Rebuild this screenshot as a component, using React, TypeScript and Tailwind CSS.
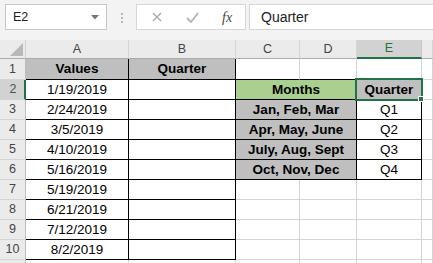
import React from "react";

const font = { fontFamily: '"Liberation Sans", Arial, sans-serif' };

type Cell = {
  text?: string;
  bold?: boolean;
  fill?: "gray" | "green";
  span?: number;
  r?: "black" | "grid";
  b?: "black" | "grid";
};

const fills = {
  gray: "bg-[#bfbfbf]",
  green: "bg-[#a9d08e]",
};

const dates = ["1/19/2019", "2/24/2019", "3/5/2019", "4/10/2019", "5/16/2019", "5/19/2019", "6/21/2019", "7/12/2019", "8/2/2019"];
const lookup: [string, string][] = [
  ["Jan, Feb, Mar", "Q1"],
  ["Apr, May, June", "Q2"],
  ["July, Aug, Sept", "Q3"],
  ["Oct, Nov, Dec", "Q4"],
];

function buildRows(): Cell[][] {
  const rows: Cell[][] = [];
  // row 1
  rows.push([
    { text: "Values", bold: true, fill: "gray", r: "black", b: "black" },
    { text: "Quarter", bold: true, fill: "gray", r: "black", b: "black" },
    { b: "black" },
    { b: "black" },
    { b: "black" },
    {},
  ]);
  // row 2
  rows.push([
    { text: dates[0], r: "black", b: "black" },
    { r: "black", b: "black" },
    { text: "Months", bold: true, fill: "green", span: 2, r: "black", b: "black" },
    { text: "Quarter", bold: true, fill: "gray", r: "black", b: "black" },
    {},
  ]);
  lookup.forEach(([m, q], i) => {
    rows.push([
      { text: dates[i + 1], r: "black", b: "black" },
      { r: "black", b: "black" },
      { text: m, bold: true, fill: "gray", span: 2, r: "black", b: "black" },
      { text: q, r: "black", b: "black" },
      {},
    ]);
  });
  for (let i = 5; i < 9; i++) {
    rows.push([
      { text: dates[i], r: "black", b: "black" },
      { r: "black", b: "black" },
      {},
      {},
      {},
      {},
    ]);
  }
  // row 11, only its top edge shows
  rows.push([{}, {}, {}, {}, {}, {}]);
  return rows;
}

function DataCell({ cell }: { cell: Cell }) {
  const rc = cell.r === "black" ? "border-r-black" : "border-r-[#d4d4d4]";
  const bc = cell.b === "black" ? "border-b-black" : "border-b-[#d4d4d4]";
  return (
    <div
      className={`flex items-center justify-center overflow-hidden whitespace-nowrap border-r border-b pt-px text-[13.5px] text-black ${rc} ${bc} ${
        cell.fill ? fills[cell.fill] : "bg-white"
      } ${cell.bold ? "font-bold" : ""} ${cell.span === 2 ? "col-span-2" : ""}`}
    >
      {cell.text}
    </div>
  );
}

export default function App() {
  const rows = buildRows();
  const colLetters = ["A", "B", "C", "D", "E", ""];

  return (
    <div className="h-[263px] w-[433px] overflow-hidden bg-white" style={font}>
      {/* formula bar */}
      <div className="flex h-[40px] items-start bg-[#f3f3f3] pt-[4px] pl-[5px]">
        <div className="relative flex h-[26px] w-[102px] items-center border border-[#c8c8c8] bg-white pl-[7px] text-[12.5px] text-[#222]">
          E2
          <svg className="absolute right-[7px] top-[10px]" width="8" height="5" viewBox="0 0 8 5">
            <path d="M0 0h8L4 4.5z" fill="#777" />
          </svg>
        </div>
        <div className="ml-[14px] mt-[9px] flex flex-col gap-[2px]">
          <span className="h-[2px] w-[2px] bg-[#b8b8b8]" />
          <span className="h-[2px] w-[2px] bg-[#b8b8b8]" />
          <span className="h-[2px] w-[2px] bg-[#b8b8b8]" />
        </div>
        <div className="ml-[13px] flex h-[26px] w-[110px] items-center border border-[#d6d6d6] bg-white">
          <svg className="ml-[15px]" width="10" height="10" viewBox="0 0 10 10">
            <path d="M1 1l8 8M9 1l-8 8" stroke="#a8a8a8" strokeWidth="1.3" />
          </svg>
          <svg className="ml-[24px]" width="13" height="11" viewBox="0 0 13 11">
            <path d="M1 6l4 4 7-9" stroke="#b4b4b4" strokeWidth="1.8" fill="none" />
          </svg>
          <span
            className="ml-[23px] text-[14px] italic text-[#444]"
            style={{ fontFamily: '"Liberation Serif", "Times New Roman", serif' }}
          >
            fx
          </span>
        </div>
        <div className="ml-[3px] flex h-[26px] flex-1 items-center border border-[#d6d6d6] border-r-0 bg-white pl-[11px] text-[14px] text-[#222]">
          Quarter
        </div>
      </div>

      {/* sheet */}
      <div className="relative grid grid-cols-[26px_103px_107px_64px_57px_65px_1fr] grid-rows-[19px_21px_repeat(10,20px)]">
        <div className="relative border-r border-b border-r-[#d4d4d4] border-b-[#ababab] bg-[#ebebeb]">
          <svg className="absolute right-[2px] bottom-[2px]" width="13" height="13" viewBox="0 0 13 13">
            <path d="M13 0V13H0z" fill="#b8b8b8" />
          </svg>
        </div>
        {colLetters.map((c, i) =>
          c === "E" ? (
            <div
              key={i}
              className="flex items-center justify-center border-r border-b-2 border-r-[#c8c8c8] border-b-[#217346] bg-[#d2d2d2] text-[12.5px] text-[#217346]"
            >
              {c}
            </div>
          ) : (
            <div
              key={i}
              className="flex items-center justify-center border-r border-b border-r-[#d4d4d4] border-b-[#ababab] bg-[#ebebeb] text-[12.5px] text-[#444]"
            >
              {c}
            </div>
          )
        )}

        {rows.map((row, ri) => (
          <React.Fragment key={ri}>
            {ri === 1 ? (
              <div className="flex items-center justify-center border-r-2 border-b border-r-[#217346] border-b-[#d4d4d4] bg-[#d2d2d2] pl-[2px] text-[12.5px] text-[#3b5a47]">
                {ri + 1}
              </div>
            ) : (
              <div className="flex items-center justify-center border-r border-b border-r-[#bdbdbd] border-b-[#d4d4d4] bg-[#ebebeb] text-[12.5px] text-[#444]">
                {ri < 10 ? ri + 1 : ""}
              </div>
            )}
            {row.map((cell, ci) => (
              <DataCell key={ci} cell={cell} />
            ))}
          </React.Fragment>
        ))}

        {/* selection on E2 */}
        <div className="pointer-events-none absolute left-[355px] top-[38px] h-[23px] w-[68px] border-2 border-[#217346]" />
        <div className="pointer-events-none absolute left-[418px] top-[56px] h-[6px] w-[6px] border border-white bg-[#217346]" />
      </div>
    </div>
  );
}
